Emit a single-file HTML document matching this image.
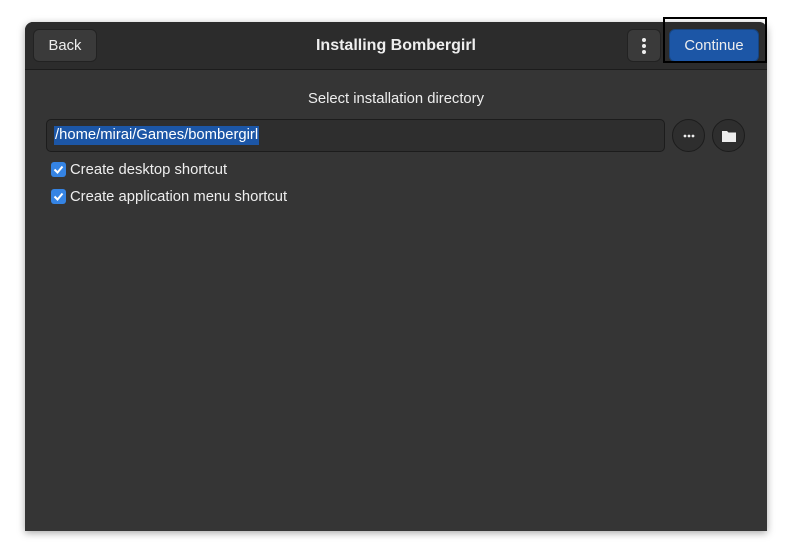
<!DOCTYPE html><html><head><style>
body{margin:0;width:792px;height:559px;background:#fff;position:relative;font-family:"Liberation Sans","DejaVu Sans",sans-serif;overflow:hidden}
.win{position:absolute;left:25px;top:22px;width:742px;height:509px;background:#353535;border-radius:8px 8px 0 0;box-shadow:0 2px 8px rgba(0,0,0,.35);overflow:hidden}
.hb{position:absolute;left:0;top:0;width:742px;height:47px;background:#2c2c2c;border-bottom:1px solid #1c1c1c}
.btn{position:absolute;top:7px;height:33px;border-radius:6px;background:#3a3a3a;border:1px solid #222;box-sizing:border-box;color:#eee;font-size:14.8px;display:flex;align-items:center;justify-content:center;padding-top:1px}
.t{position:absolute;left:0;right:0;text-align:center;color:#eee}
.cb{position:absolute;left:26px;width:15px;height:15px;background:#3584e4;border-radius:3px}
.lbl{position:absolute;left:45px;color:#eee;font-size:14.8px}
.circ{position:absolute;top:97px;width:33px;height:33px;border-radius:50%;border:1px solid #1c1c1c;background:#2e2e2e;box-sizing:border-box;display:flex;align-items:center;justify-content:center}
</style></head><body>
<div class="win">
<div class="hb">
<div class="btn" style="left:8px;width:64px">Back</div>
<div class="t" style="top:15px;font-weight:bold;font-size:16px">Installing Bombergirl</div>
<div class="btn" style="left:602px;width:34px"><svg width="6" height="18"><circle cx="3" cy="3" r="2" fill="#eee"/><circle cx="3" cy="9" r="2" fill="#eee"/><circle cx="3" cy="15" r="2" fill="#eee"/></svg></div>
<div class="btn" style="left:644px;width:90px;background:#1c56a6;border-color:#17447f">Continue</div>
</div>
<div class="t" style="top:69px;font-size:14.8px">Select installation directory</div>
<div style="position:absolute;left:21px;top:97px;width:619px;height:33px;background:#2e2e2e;border:1px solid #1c1c1c;border-radius:5px;box-sizing:border-box"></div>
<div style="position:absolute;left:29px;top:104px;background:#1c56a6;color:#fff;font-size:14.8px;padding:0 1px;line-height:19px">/home/mirai/Games/bombergirl</div>
<div class="circ" style="left:647px"><svg width="12" height="4"><circle cx="2" cy="2" r="1.4" fill="#eee"/><circle cx="6" cy="2" r="1.4" fill="#eee"/><circle cx="10" cy="2" r="1.4" fill="#eee"/></svg></div>
<div class="circ" style="left:687px"><svg width="14" height="12"><path d="M0 1h5l1.5 1.5H14V12H0z" fill="#eee"/></svg></div>
<div class="cb" style="top:140px"><svg width="15" height="15"><path d="M3.5 7.5l3 3 5-6" stroke="#fff" stroke-width="2" fill="none"/></svg></div>
<div class="lbl" style="top:140px">Create desktop shortcut</div>
<div class="cb" style="top:167px"><svg width="15" height="15"><path d="M3.5 7.5l3 3 5-6" stroke="#fff" stroke-width="2" fill="none"/></svg></div>
<div class="lbl" style="top:167px">Create application menu shortcut</div>
</div>
<div style="position:absolute;left:663px;top:17px;width:104px;height:46px;border:2px solid #000;box-sizing:border-box"></div>
</body></html>
